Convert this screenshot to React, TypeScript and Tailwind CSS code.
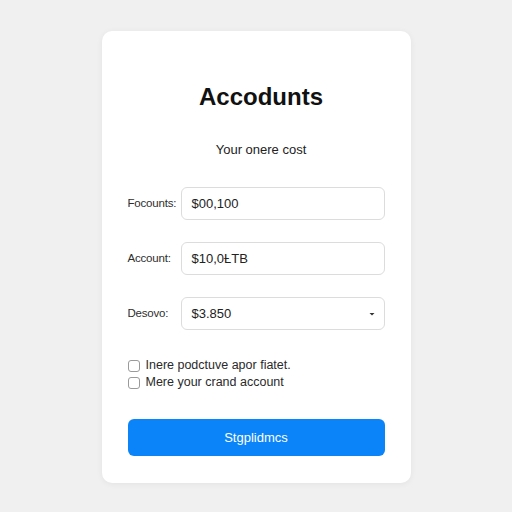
import React from "react";

function Row({ label, value, select }: { label: string; value: string; select?: boolean }) {
  return (
    <div className="flex items-center">
      <div className="w-[53px] text-[11.5px] tracking-[-0.2px] text-[#2e2e2e]">{label}</div>
      <div className="flex h-[33px] flex-1 items-center justify-between rounded-[6px] border border-[#dcdcdc] bg-white pl-[10px] pr-[8px] text-[13px] text-[#222]">
        <span>{value}</span>
        {select && (
          <svg width="8" height="6" viewBox="0 0 8 6">
            <path d="M1.5 2 L4 4.5 L6.5 2 Z" fill="#333" />
          </svg>
        )}
      </div>
    </div>
  );
}

function Check({ label }: { label: string }) {
  return (
    <div className="flex h-[17px] items-center">
      <div className="h-[12px] w-[12px] rounded-[3px] border border-[#9a9a9a] bg-white" />
      <span className="ml-[6px] text-[12.5px] text-[#2a2a2a]">{label}</span>
    </div>
  );
}

export default function App() {
  return (
    <div
      className="flex h-[512px] w-[512px] justify-center bg-[#f0f0f0] pt-[31px]"
      style={{ fontFamily: '"Liberation Sans", Arial, sans-serif' }}
    >
      <div className="flex h-[452px] w-[309px] flex-col rounded-[10px] bg-white px-[26px] pt-[50px] shadow-[0_1px_6px_rgba(0,0,0,0.06)]">
        <h1 className="pl-[10px] text-center text-[24px] font-bold leading-[32px] text-[#111]">Accodunts</h1>
        <p className="mt-[27px] pl-[10px] text-center text-[13px] leading-[20px] text-[#222]">Your onere cost</p>
        <div className="mt-[27px] flex flex-col gap-[22px]">
          <Row label="Focounts:" value="$00,100" />
          <Row label="Account:" value="$10,0ȽTB" />
          <Row label="Desovo:" value="$3.850" select />
        </div>
        <div className="mt-[27px] flex flex-col">
          <Check label="Inere podctuve apor fiatet." />
          <Check label="Mere your crand account" />
        </div>
        <button className="mt-[28px] h-[37px] w-full rounded-[6px] bg-[#0a84f8] text-[13px] text-white">
          Stgplidmcs
        </button>
      </div>
    </div>
  );
}
